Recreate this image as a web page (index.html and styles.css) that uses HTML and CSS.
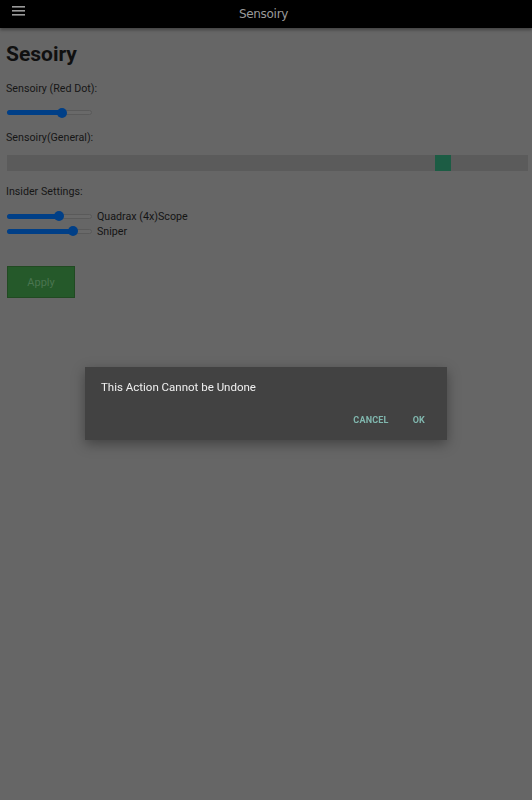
FILE: index.html
```html
<!DOCTYPE html>
<html lang="en">
<head>
  <meta charset="UTF-8">
  <meta name="viewport" content="width=device-width, initial-scale=1.0">
  <title>Sensoiry</title>
  <link rel="stylesheet" href="styles.css">
</head>
<body>
  <header class="topbar">
    <span class="menu-btn">
      <svg width="13" height="10" viewBox="0 0 13 10">
        <rect x="0" y="0" width="13" height="1.6" fill="#9a9a9a"/>
        <rect x="0" y="4" width="13" height="1.6" fill="#9a9a9a"/>
        <rect x="0" y="8" width="13" height="1.6" fill="#9a9a9a"/>
      </svg>
    </span>
    <span class="topbar-title">Sensoiry</span>
  </header>

  <main class="page">
    <h1>Sesoiry</h1>

    <label class="field-label">Sensoiry (Red Dot):</label>
    <div class="slider">
      <div class="slider-fill" style="width: 66%"></div>
      <div class="slider-thumb"></div>
    </div>

    <label class="field-label">Sensoiry(General):</label>
    <div class="wide-bar">
      <div class="wide-fill" style="width: 82.1%"></div>
      <div class="wide-thumb"></div>
    </div>

    <label class="field-label">Insider Settings:</label>
    <div class="setting-row">
      <div class="slider">
        <div class="slider-fill" style="width: 63%"></div>
        <div class="slider-thumb"></div>
      </div>
      <span>Quadrax (4x)Scope</span>
    </div>
    <div class="setting-row">
      <div class="slider">
        <div class="slider-fill" style="width: 79%"></div>
        <div class="slider-thumb"></div>
      </div>
      <span>Sniper</span>
    </div>

    <button class="apply-btn">Apply</button>
  </main>

  <!-- Confirm dialog -->
  <div class="backdrop">
    <div class="dialog">
      <p class="dialog-text">This Action Cannot be Undone</p>
      <div class="dialog-actions">
        <button class="text-btn">CANCEL</button>
        <button class="text-btn">OK</button>
      </div>
    </div>
  </div>
</body>
</html>
```

FILE: styles.css
```css
* {
  margin: 0;
  padding: 0;
  box-sizing: border-box;
}

body {
  font-family: Roboto, "Liberation Sans", Arial, sans-serif;
  background: #666666;
  color: #141414;
  height: 100vh;
}

/* Top bar */
.topbar {
  height: 28px;
  background: #000;
  display: flex;
  align-items: center;
  position: relative;
  box-shadow: 0 2px 3px rgba(0, 0, 0, 0.35);
}

.menu-btn {
  display: flex;
  margin-left: 12px;
  margin-top: -6px;
}

.topbar-title {
  flex: 1;
  text-align: center;
  margin-left: -30px;
  font-family: "DejaVu Sans", sans-serif;
  font-size: 12px;
  color: #9a9a9a;
  letter-spacing: -0.3px;
}

/* Page content */
.page {
  padding: 14px 6px 0 6px;
  display: flex;
  flex-direction: column;
  align-items: flex-start;
}

h1 {
  font-size: 21px;
  font-weight: 700;
  color: #101010;
  margin-bottom: 16px;
}

.field-label {
  font-size: 10.7px;
  color: #161616;
  margin-bottom: 11px;
}

/* Small range sliders */
.slider {
  position: relative;
  width: 85px;
  height: 5px;
  margin-left: 1px;
  border: 1px solid #5a5a5a;
  border-radius: 3px;
  background: #696969;
  display: flex;
}

.slider-fill {
  background: #003f87;
  border-radius: 3px 0 0 3px;
  margin: -1px 0 0 -1px;
  height: 5px;
}

.slider-thumb {
  width: 10px;
  height: 10px;
  border-radius: 50%;
  background: #003f87;
  margin: -3.5px 0 0 -5px;
}

.page > .slider {
  margin: 4px 0 16px 1px;
}

/* Wide general bar */
.wide-bar {
  width: 521px;
  height: 16px;
  margin-left: 1px;
  background: #5b5b5b;
  display: flex;
  margin-bottom: 14px;
}

.wide-thumb {
  width: 16px;
  height: 16px;
  background: #1c5c44;
}

.setting-row {
  display: flex;
  align-items: center;
  gap: 5px;
  font-size: 10.7px;
  color: #141414;
  height: 14px;
  margin-bottom: 1px;
}

.apply-btn {
  margin-top: 27px;
  margin-left: 1px;
  width: 68px;
  height: 32px;
  border: 1px solid #214a22;
  background: #25592a;
  color: #4a7550;
  font-family: Roboto, sans-serif;
  font-size: 11px;
}

/* Dialog */
.backdrop {
  position: fixed;
  inset: 0;
  display: flex;
  justify-content: center;
  align-items: center;
  padding-top: 7px;
}

.dialog {
  width: 362px;
  height: 73px;
  background: #424242;
  box-shadow: 0 4px 12px rgba(0, 0, 0, 0.35);
  padding: 13px 16px 0 16px;
  display: flex;
  flex-direction: column;
}

.dialog-text {
  font-size: 11.5px;
  color: #f0f0f0;
}

.dialog-actions {
  display: flex;
  justify-content: flex-end;
  gap: 8px;
  margin-top: 21px;
  margin-right: -2px;
}

.text-btn {
  background: none;
  border: none;
  padding: 0 8px;
  font-family: Roboto, sans-serif;
  font-weight: 700;
  font-size: 9px;
  color: #80b7ae;
  letter-spacing: 0.2px;
}
```
